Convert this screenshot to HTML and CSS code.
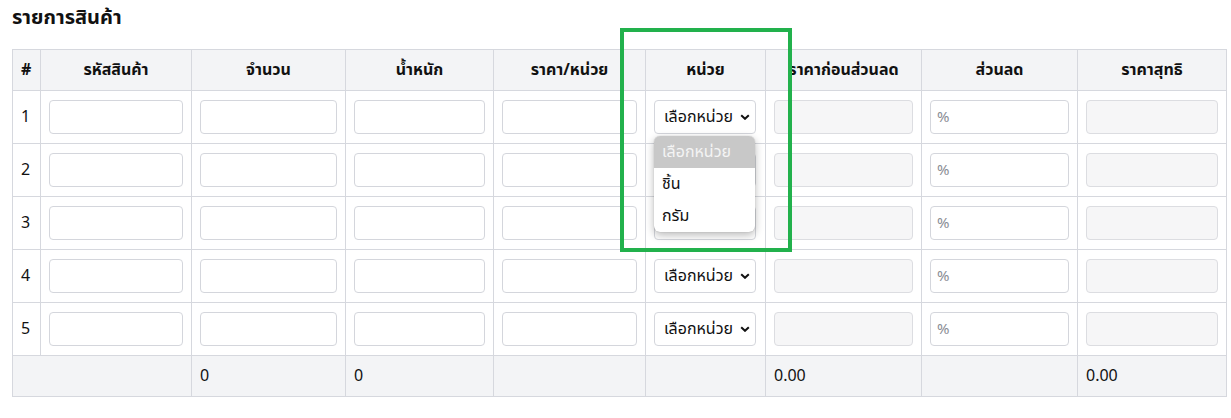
FILE: index.html
```html
<!DOCTYPE html>
<html lang="th">
<head>
<meta charset="utf-8">
<title>รายการสินค้า</title>
<link rel="stylesheet" href="styles.css">
</head>
<body>
<div class="page">
  <h2 class="title">รายการสินค้า</h2>
  <table class="items">
    <colgroup>
      <col class="c-no"><col class="c-code"><col class="c-qty"><col class="c-wt"><col class="c-price"><col class="c-unit"><col class="c-pre"><col class="c-disc"><col class="c-net">
    </colgroup>
    <thead>
      <tr><th>#</th><th>รหัสสินค้า</th><th>จำนวน</th><th>น้ำหนัก</th><th>ราคา/หน่วย</th><th>หน่วย</th><th>ราคาก่อนส่วนลด</th><th>ส่วนลด</th><th>ราคาสุทธิ</th></tr>
    </thead>
    <tbody>
      <tr><td>1</td><td><input class="field"></td><td><input class="field"></td><td><input class="field"></td><td><input class="field"></td><td><div class="select"><span>เลือกหน่วย</span><svg class="chev" viewBox="0 0 10 6" width="10" height="6"><path d="M1.2 1.2 5 4.8 8.8 1.2" fill="none" stroke="#111" stroke-width="2"/></svg></div></td><td><input class="field" disabled></td><td><input class="field" placeholder="%"></td><td><input class="field" disabled></td></tr>
      <tr><td>2</td><td><input class="field"></td><td><input class="field"></td><td><input class="field"></td><td><input class="field"></td><td><div class="select"><span>เลือกหน่วย</span><svg class="chev" viewBox="0 0 10 6" width="10" height="6"><path d="M1.2 1.2 5 4.8 8.8 1.2" fill="none" stroke="#111" stroke-width="2"/></svg></div></td><td><input class="field" disabled></td><td><input class="field" placeholder="%"></td><td><input class="field" disabled></td></tr>
      <tr><td>3</td><td><input class="field"></td><td><input class="field"></td><td><input class="field"></td><td><input class="field"></td><td><div class="select"><span>เลือกหน่วย</span><svg class="chev" viewBox="0 0 10 6" width="10" height="6"><path d="M1.2 1.2 5 4.8 8.8 1.2" fill="none" stroke="#111" stroke-width="2"/></svg></div></td><td><input class="field" disabled></td><td><input class="field" placeholder="%"></td><td><input class="field" disabled></td></tr>
      <tr><td>4</td><td><input class="field"></td><td><input class="field"></td><td><input class="field"></td><td><input class="field"></td><td><div class="select"><span>เลือกหน่วย</span><svg class="chev" viewBox="0 0 10 6" width="10" height="6"><path d="M1.2 1.2 5 4.8 8.8 1.2" fill="none" stroke="#111" stroke-width="2"/></svg></div></td><td><input class="field" disabled></td><td><input class="field" placeholder="%"></td><td><input class="field" disabled></td></tr>
      <tr><td>5</td><td><input class="field"></td><td><input class="field"></td><td><input class="field"></td><td><input class="field"></td><td><div class="select"><span>เลือกหน่วย</span><svg class="chev" viewBox="0 0 10 6" width="10" height="6"><path d="M1.2 1.2 5 4.8 8.8 1.2" fill="none" stroke="#111" stroke-width="2"/></svg></div></td><td><input class="field" disabled></td><td><input class="field" placeholder="%"></td><td><input class="field" disabled></td></tr>
    </tbody>
    <tfoot>
      <tr><td colspan="2"></td><td>0</td><td>0</td><td></td><td></td><td>0.00</td><td></td><td>0.00</td></tr>
    </tfoot>
  </table>
  <ul class="menu">
    <li class="opt active">เลือกหน่วย</li>
    <li class="opt">ชิ้น</li>
    <li class="opt">กรัม</li>
  </ul>
  <div class="highlight"></div>
</div>
</body>
</html>
```
FILE: styles.css
```css
* { box-sizing: border-box; }
html, body { margin: 0; padding: 0; background: #fff; }
body {
  font-family: "Noto Sans Thai", "Noto Sans", "Liberation Sans", sans-serif;
  font-size: 16px;
  color: #111;
}
.page {
  position: relative;
  padding: 5px 5px 0 12px;
}
.title {
  margin: 0 0 18px;
  font-size: 20px;
  font-weight: 700;
  line-height: 26px;
}
.items {
  width: 1214px;
  table-layout: fixed;
  border-collapse: collapse;
}
.c-no { width: 28px; }
.c-code { width: 151px; }
.c-qty { width: 154px; }
.c-wt { width: 148px; }
.c-price { width: 152px; }
.c-unit { width: 120px; }
.c-pre { width: 156px; }
.c-disc { width: 156px; }
.c-net { width: 149px; }
.items th, .items td {
  border: 1px solid #d6d8de;
  padding: 9px 8px;
  line-height: 22px;
  text-align: left;
  vertical-align: middle;
}
.items th {
  background: #f3f4f6;
  font-weight: 700;
  text-align: center;
}
.items th:first-child { text-align: left; }
.items tfoot td { background: #f3f4f6; }
.field {
  display: block;
  width: 100%;
  height: 34px;
  border: 1px solid #d4d6dc;
  border-radius: 4px;
  background: #fff;
  padding: 0 6px;
  font: inherit;
  font-size: 15px;
  color: #111;
}
.field::placeholder { color: #8a8d94; }
.field:disabled { background: #f6f6f7; border-color: #dcdde1; }
.select {
  display: flex;
  align-items: center;
  justify-content: space-between;
  width: 102px;
  height: 34px;
  border: 1px solid #d4d6dc;
  border-radius: 4px;
  padding: 0 5px 0 9px;
  background: #fff;
  white-space: nowrap;
}
.chev { flex: none; }
.menu {
  position: absolute;
  left: 654px;
  top: 136px;
  width: 101px;
  margin: 0;
  padding: 0;
  list-style: none;
  background: #fff;
  border-radius: 6px;
  overflow: hidden;
  box-shadow: 0 3px 9px rgba(0, 0, 0, 0.28), 0 0 1px rgba(0, 0, 0, 0.3);
}
.opt {
  height: 32px;
  line-height: 32px;
  padding: 0 8px;
  white-space: nowrap;
}
.opt.active { background: #c8c8c8; color: #f4f4f4; }
.highlight {
  position: absolute;
  left: 620px;
  top: 28px;
  width: 172px;
  height: 224px;
  border: 4.5px solid #22b14c;
  pointer-events: none;
}
```
